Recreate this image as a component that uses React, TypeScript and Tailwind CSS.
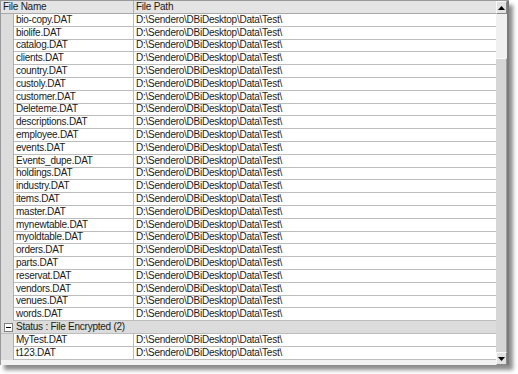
import React from 'react';

const files = [
  'bio-copy.DAT', 'biolife.DAT', 'catalog.DAT', 'clients.DAT', 'country.DAT', 'custoly.DAT',
  'customer.DAT', 'Deleteme.DAT', 'descriptions.DAT', 'employee.DAT', 'events.DAT', 'Events_dupe.DAT',
  'holdings.DAT', 'industry.DAT', 'items.DAT', 'master.DAT', 'mynewtable.DAT', 'myoldtable.DAT',
  'orders.DAT', 'parts.DAT', 'reservat.DAT', 'vendors.DAT', 'venues.DAT', 'words.DAT',
];
const encrypted = ['MyTest.DAT', 't123.DAT'];
const PATH = 'D:\\Sendero\\DBiDesktop\\Data\\Test\\';

function Row({ name }: { name: string }) {
  return (
    <div className="flex h-[12.8px]">
      <div className="w-[13px] shrink-0 bg-[#dcdcdc] border-r border-[#b0b0b0]" />
      <div className="flex flex-1 bg-white border-b border-[#bdbdbd]">
        <div className="w-[120px] shrink-0 pl-[2px] flex items-center border-r border-[#bdbdbd] whitespace-nowrap overflow-hidden">{name}</div>
        <div className="flex-1 pl-[2px] flex items-center whitespace-nowrap overflow-hidden">{PATH}</div>
      </div>
    </div>
  );
}

function Arrow({ up }: { up?: boolean }) {
  return (
    <div className="h-[13px] shrink-0 flex items-center justify-center bg-[#e2e2e2] border border-[#f8f8f8] border-r-[#888] border-b-[#888]">
      <svg width="7" height="4" viewBox="0 0 7 4">
        <path d={up ? 'M0 4 L3.5 0 L7 4 Z' : 'M0 0 L3.5 4 L7 0 Z'} fill="#000" />
      </svg>
    </div>
  );
}

export default function App() {
  return (
    <div className="w-[518px] h-[374px] bg-white text-[10px] tracking-[-0.25px] leading-none text-[#1a1a1a]" style={{ fontFamily: '"Liberation Sans", Arial, sans-serif' }}>
      <div className="w-[509px] h-[365px] flex bg-[#f2f2f2] border-l border-t border-[#9a9a9a] shadow-[4px_5px_4px_rgba(0,0,0,0.45)]">
        {/* grid */}
        <div className="flex-1 flex flex-col overflow-hidden">
          <div className="flex h-[13px] shrink-0 bg-[#e4e4e4] border-b border-[#a8a8a8]">
            <div className="w-[133px] shrink-0 pl-[2px] flex items-center border-r border-[#b0b0b0]">File Name</div>
            <div className="flex-1 pl-[2px] flex items-center">File Path</div>
          </div>
          {files.map(f => <Row key={f} name={f} />)}
          <div className="flex items-center h-[12.8px] shrink-0 bg-[#dcdcdc] border-b border-[#bdbdbd]">
            <div className="ml-[3px] w-[9px] h-[9px] bg-white border border-[#808080] flex items-center justify-center">
              <div className="w-[5px] h-px bg-black" />
            </div>
            <span className="ml-[3px]">Status : File Encrypted (2)</span>
          </div>
          {encrypted.map(f => <Row key={f} name={f} />)}
        </div>
        {/* scrollbar */}
        <div className="w-[13px] shrink-0 flex flex-col bg-[#eeeeee] border-r-2 border-[#7a7a7a]">
          <Arrow up />
          <div className="h-[44px] bg-[#f0f0f0]" />
          <div className="flex-1 bg-[#d6d6d6] border-r border-[#a0a0a0] border-t border-t-[#fafafa]" />
          <Arrow />
        </div>
      </div>
    </div>
  );
}
